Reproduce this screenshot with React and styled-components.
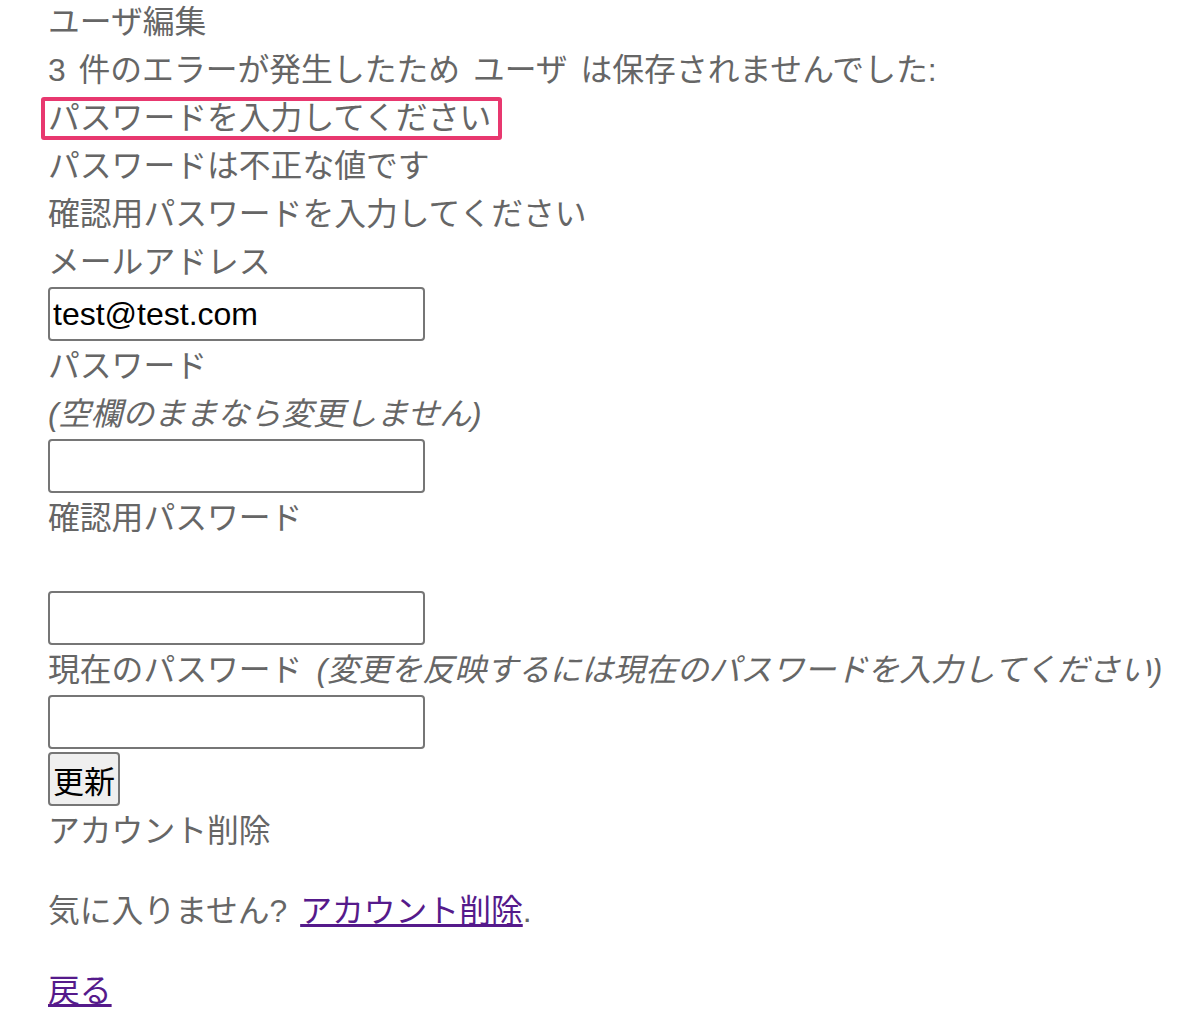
import styled, { createGlobalStyle } from 'styled-components';

const GlobalStyle = createGlobalStyle`
  html, body {
    margin: 0;
    padding: 0;
    background: #ffffff;
  }
  body {
    font-family: "Liberation Sans", "Noto Sans CJK JP", sans-serif;
  }
`;

const Page = styled.div`
  display: flex;
  flex-direction: column;
  align-items: flex-start;
  padding: 0 0 0 48px;
  margin-top: -2px;
  font-size: 31.8px;
  line-height: 48px;
  word-spacing: 4px;
  color: #666666;
`;

const Line = styled.div`
  height: 48px;
  white-space: nowrap;
  font-style: ${p => (p.italic ? 'italic' : 'normal')};
`;

const Blank = styled.div`
  height: 48px;
`;

const Marked = styled.span`
  display: inline-block;
  line-height: 35px;
  padding: 0 7px 0 3px;
  margin-left: -7px;
  border: 4px solid #e8386f;
  border-radius: 3px;
`;

const Hint = styled.i`
  font-style: italic;
  margin-left: 14px;
`;

const Field = styled.input`
  box-sizing: border-box;
  width: 377px;
  height: 54px;
  margin: 1px 0;
  padding: 0 3px;
  border: 2px solid #767676;
  border-radius: 4px;
  font-family: "Liberation Sans", "Noto Sans CJK JP", sans-serif;
  font-size: 32px;
  color: #000000;
  background: #ffffff;
  outline: none;
`;

const Submit = styled.button`
  box-sizing: border-box;
  height: 54px;
  margin: 2px 0 1px;
  padding: 0 3px;
  border: 2px solid #767676;
  border-radius: 4px;
  background: #efefef;
  color: #000000;
  font-family: "Noto Sans CJK JP", sans-serif;
  font-size: 31px;
  line-height: 1;
`;

const Para = styled.p`
  margin: ${p => p.gap || 0}px 0 0;
  line-height: 48px;
  white-space: nowrap;
`;

const Link = styled.a`
  color: #551a8b;
  text-decoration: underline;
  text-underline-offset: 2px;
`;

export default function App() {
  return (
    <>
      <GlobalStyle />
      <Page>
        <Line>ユーザ編集</Line>
        <Line>3 件のエラーが発生したため ユーザ は保存されませんでした:</Line>
        <Line>
          <Marked>パスワードを入力してください</Marked>
        </Line>
        <Line>パスワードは不正な値です</Line>
        <Line>確認用パスワードを入力してください</Line>
        <Line>メールアドレス</Line>
        <Field type="email" defaultValue="test@test.com" />
        <Line>パスワード</Line>
        <Line italic>(空欄のままなら変更しません)</Line>
        <Field type="password" />
        <Line>確認用パスワード</Line>
        <Blank />
        <Field type="password" />
        <Line>
          現在のパスワード<Hint>(変更を反映するには現在のパスワードを入力してください)</Hint>
        </Line>
        <Field type="password" />
        <Submit type="submit">更新</Submit>
        <Line>アカウント削除</Line>
        <Para gap={32}>
          気に入りません? <Link href="#">アカウント削除</Link>.
        </Para>
        <Para gap={32}>
          <Link href="#">戻る</Link>
        </Para>
      </Page>
    </>
  );
}
